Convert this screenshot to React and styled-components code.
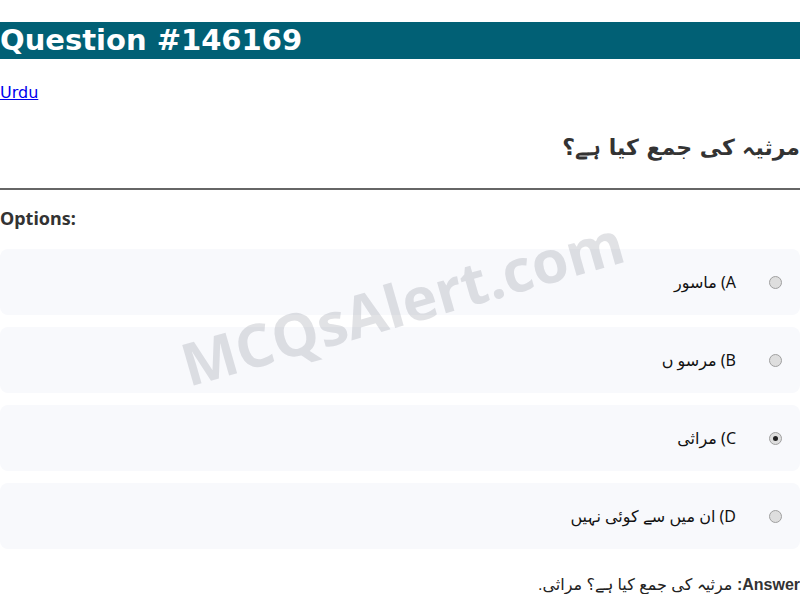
import React from "react";
import styled, { createGlobalStyle } from "styled-components";

const Global = createGlobalStyle`
  html, body { margin: 0; padding: 0; background: #fff; }
  body { font-family: "DejaVu Sans", sans-serif; font-size: 16px; }
`;

const Page = styled.div`
  position: relative;
  overflow: hidden;
`;

const Title = styled.h1`
  margin: 22px 0 24px;
  background: #016075;
  color: #fff;
  font-size: 29px;
  font-weight: bold;
  line-height: 37px;
`;

const LangLine = styled.p`
  margin: 0 0 16px;
  line-height: 19px;
  a { color: #0000ee; text-decoration: underline; }
`;

const Question = styled.h2`
  margin: 0;
  padding: 12px 0 22px;
  direction: rtl;
  text-align: right;
  font-size: 22px;
  font-weight: bold;
  color: #333;
  line-height: 36px;
  border-bottom: 2px solid #666;
`;

const OptionsLabel = styled.h3`
  margin: 17px 0 20px;
  font-family: "Noto Sans", sans-serif;
  font-size: 18px;
  font-weight: 700;
  color: #333;
  line-height: 22px;
`;

const OptionList = styled.div`
  display: flex;
  flex-direction: column;
  gap: 12px;
`;

const OptionRow = styled.label`
  direction: rtl;
  display: flex;
  align-items: center;
  gap: 33px;
  height: 66px;
  padding: 0 18px;
  box-sizing: border-box;
  background: #f8f9fc;
  border-radius: 8px;
  font-family: "Noto Sans", "DejaVu Sans", sans-serif;
  font-size: 16px;
  color: #111;
`;

const Radio = styled.span`
  width: 11px;
  height: 11px;
  border-radius: 50%;
  border: 1px solid #a0a0a0;
  background: #dedede;
  display: flex;
  align-items: center;
  justify-content: center;
  flex: none;
  &::after {
    content: "";
    display: ${(p) => (p.$checked ? "block" : "none")};
    width: 5px;
    height: 5px;
    border-radius: 50%;
    background: #222;
  }
`;

const Answer = styled.p`
  direction: rtl;
  text-align: right;
  margin: 26px 0 0;
  font-family: "Liberation Sans", "DejaVu Sans", sans-serif;
  font-size: 16px;
  color: #222;
  strong { color: #333; }
`;

const Watermark = styled.div`
  position: absolute;
  left: 402px;
  top: 302px;
  transform: translate(-50%, -50%) rotate(-16deg);
  font-family: "Open Sans", sans-serif;
  font-weight: 700;
  font-size: 59px;
  color: rgba(90, 95, 110, 0.18);
  white-space: nowrap;
  pointer-events: none;
`;

const options = [
  { key: "A", text: "ماسور" },
  { key: "B", text: "مرسو ں" },
  { key: "C", text: "مراثی", checked: true },
  { key: "D", text: "ان میں سے کوئی نہیں" },
];

export default function App() {
  return (
    <Page>
      <Global />
      <Title>Question #146169</Title>
      <LangLine>
        <a href="#">Urdu</a>
      </LangLine>
      <Question>مرثیہ کی جمع کیا ہے؟</Question>
      <OptionsLabel>Options:</OptionsLabel>
      <OptionList>
        {options.map((o) => (
          <OptionRow key={o.key}>
            <Radio $checked={o.checked} />
            <span>
              {o.key}) {o.text}
            </span>
          </OptionRow>
        ))}
      </OptionList>
      <Answer>
        <strong>Answer:</strong> مرثیہ کی جمع کیا ہے؟ مراثی.
      </Answer>
      <Watermark>MCQsAlert.com</Watermark>
    </Page>
  );
}
